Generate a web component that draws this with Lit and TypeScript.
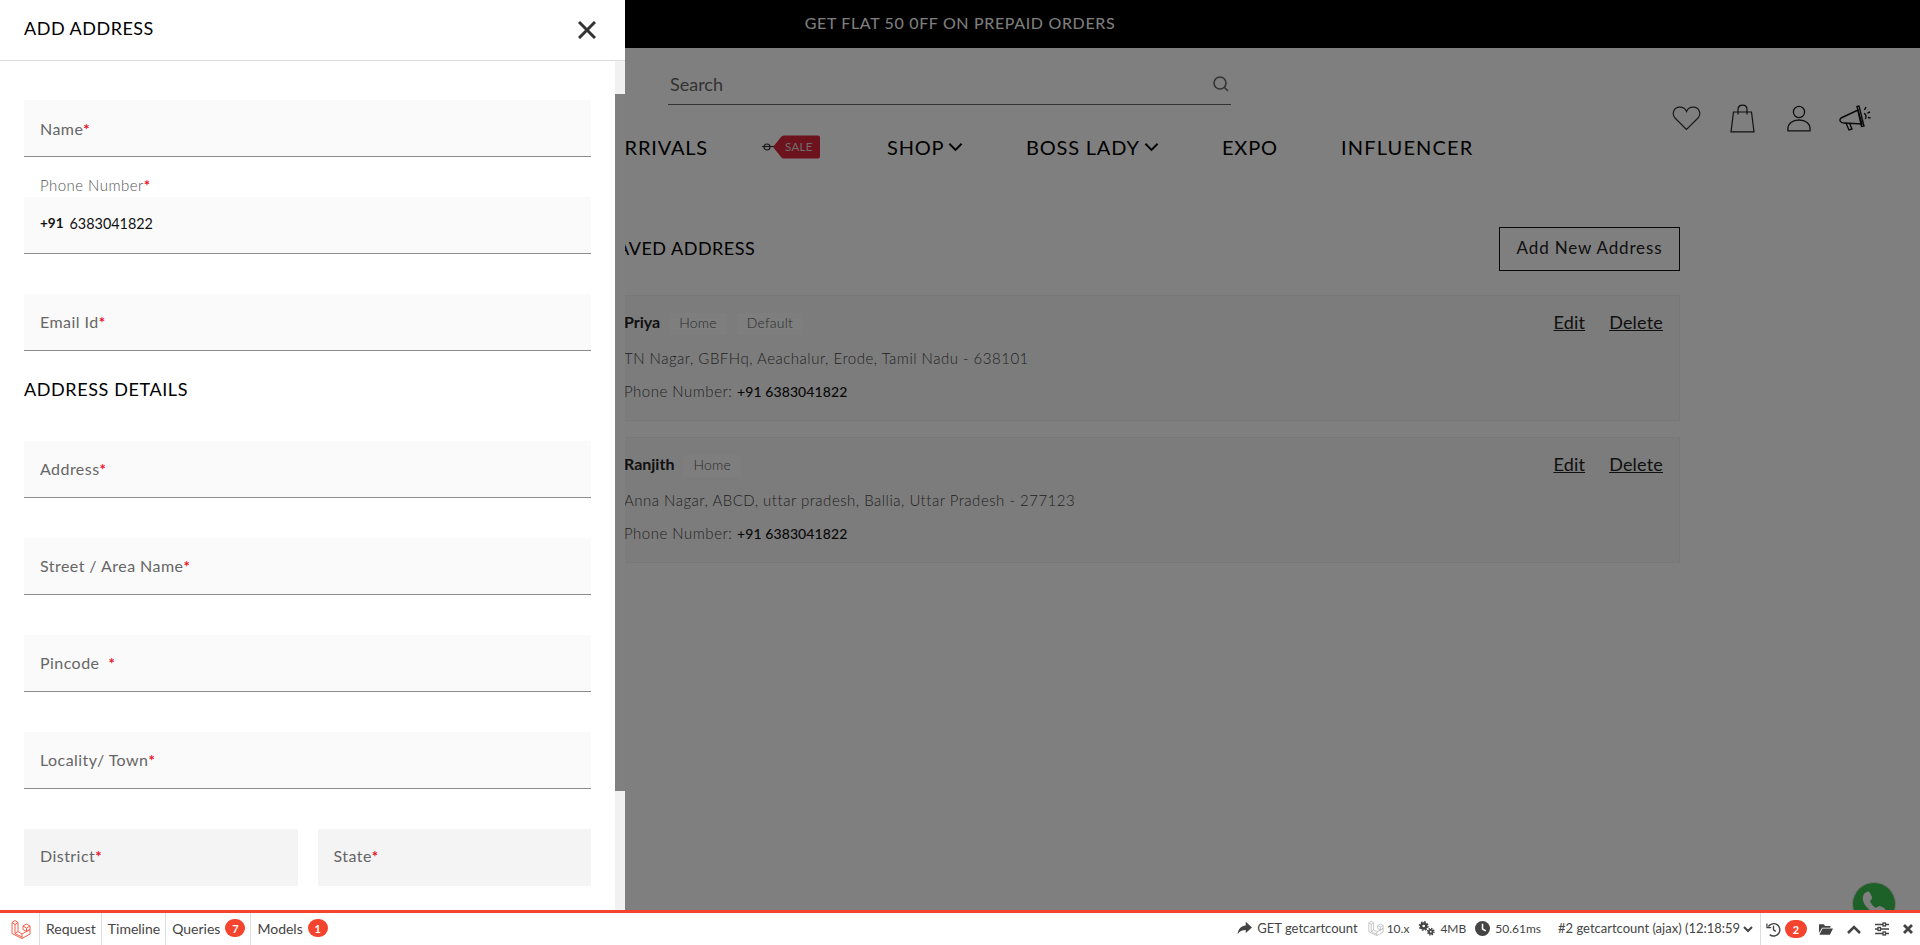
import { LitElement, html, css, svg } from 'lit';
import { customElement } from 'lit/decorators.js';

const laravelIcon = (size: number, color: string) => html`
  <svg width=${size} height=${size} viewBox="0 0 20 20" fill="none" stroke=${color} stroke-width="1" stroke-linejoin="round">
    <path d="M1 3.5 4 1.5 7 3.5V12.5L4 14.5"/>
    <path d="M1 3.5V14.5L11 19.5 19 15V10.5"/>
    <path d="M1 3.5 4 5.5 7 3.5M4 5.5V14.5L11 18"/>
    <path d="M7 12.5 11 15 19 10.5M11 15V19.5"/>
    <path d="M12 7 15.5 5 19 7V10.5L15.5 12.5 12 10.5ZM12 7 15.5 9 19 7M15.5 9V12.5"/>
  </svg>
`;

const chevron = html`
  <svg class="chev" viewBox="0 0 16 10" fill="none" stroke="#000" stroke-width="2">
    <path d="M1.5 1.5 8 8l6.5-6.5"/>
  </svg>
`;

@customElement('top-page')
class TopPage extends LitElement {
  static styles = css`
    :host {
      display: block;
      color: #000;
      font-family: Lato, "Open Sans", sans-serif;
    }
    .offer {
      height: 48px;
      box-sizing: border-box;
      padding-bottom: 4px;
      background: #000;
      color: #fff;
      display: flex;
      align-items: center;
      justify-content: center;
      font-size: 16px;
      letter-spacing: 0.65px;
    }
    .head {
      display: flex;
      height: 86px;
      padding-left: 668px;
    }
    .search {
      width: 563px;
      height: 57px;
      box-sizing: border-box;
      border-bottom: 1px solid #666;
      display: flex;
      align-items: center;
      justify-content: space-between;
      padding: 16px 1px 0 2px;
      font-size: 18px;
      color: #666;
    }
    .icons {
      display: flex;
      margin: 55px 0 0 441px;
      gap: 30px;
      align-items: center;
      height: 30px;
    }
    .nav {
      display: grid;
      grid-template-columns: 708px 179px 139px 196px 119px auto;
      height: 26px;
      align-items: center;
      font-size: 20px;
      letter-spacing: 0.8px;
      color: #000;
    }
    .nav .first {
      justify-self: end;
    }
    .nav .tag {
      margin-left: 54px;
      display: flex;
    }
    .nav .item {
      display: flex;
      align-items: center;
      gap: 4px;
    }
    .nav .wide {
      letter-spacing: 1.15px;
    }
    .chev {
      width: 15px;
      height: 10px;
    }
    .saved {
      margin: 67px 0 0 607px;
      width: 1073px;
    }
    .saved-head {
      display: flex;
      justify-content: space-between;
      align-items: center;
    }
    .saved-head h2 {
      margin: 0 0 2px;
      font-size: 18px;
      font-weight: 400;
      letter-spacing: 0.5px;
    }
    .add {
      width: 181px;
      height: 44px;
      box-sizing: border-box;
      border: 1.5px solid #111;
      padding-bottom: 3px;
      display: flex;
      align-items: center;
      justify-content: center;
      font-size: 17px;
      letter-spacing: 0.85px;
      color: #222;
    }
    .card {
      margin-top: 16px;
      height: 126px;
      box-sizing: border-box;
      border: 1px solid #eee;
      background: #f9f9f9;
      padding: 17px 16px 0;
    }
    .saved-head + .card {
      margin-top: 24px;
    }
    .row {
      display: flex;
      align-items: center;
      height: 22px;
    }
    .name {
      font-size: 16px;
      font-weight: 700;
      color: #222;
      margin: 0 9px 5px 0;
    }
    .pill {
      height: 22px;
      box-sizing: border-box;
      display: flex;
      align-items: center;
      padding: 0 10px 4px;
      margin-right: 10px;
      background: #fcfcfc;
      font-size: 14px;
      letter-spacing: 0.2px;
      color: #555;
      font-weight: 300;
    }
    .links {
      margin: 0 0 5px auto;
      display: flex;
      gap: 24px;
      font-size: 18px;
      letter-spacing: 0.2px;
      color: #222;
      text-decoration: underline;
    }
    .line {
      margin-top: 11px;
      height: 24px;
      line-height: 24px;
      font-size: 15px;
      font-weight: 300;
      letter-spacing: 0.5px;
      color: #444;
    }
    .line.phone {
      margin-top: 9px;
    }
    .line b {
      font-size: 14px;
      font-weight: 500;
      color: #111;
      letter-spacing: 0.1px;
    }
  `;

  renderCard(name: string, tags: string[], address: string) {
    return html`
      <div class="card">
        <div class="row">
          <span class="name">${name}</span>
          ${tags.map((t) => html`<span class="pill">${t}</span>`)}
          <span class="links"><span>Edit</span><span>Delete</span></span>
        </div>
        <div class="line">${address}</div>
        <div class="line phone">Phone Number: <b>+91 6383041822</b></div>
      </div>
    `;
  }

  render() {
    return html`
      <div class="offer">GET FLAT 50 0FF ON PREPAID ORDERS</div>
      <div class="head">
        <div class="search">
          <span>Search</span>
          <svg width="18" height="18" viewBox="0 0 18 18" fill="none" stroke="#666" stroke-width="1.6">
            <circle cx="8" cy="8" r="6"/><path d="M12.5 12.5 16 16"/>
          </svg>
        </div>
        <div class="icons">
          <svg width="29" height="25" viewBox="0 0 29 25" fill="none" stroke="#333" stroke-width="1.2">
            <path d="M14.5 23.5 3 12C-.5 8 1.5 1.5 7.5 1.2 11 1 13.5 3 14.5 5.5 15.5 3 18 1 21.5 1.2 27.5 1.5 29.5 8 26 12Z"/>
          </svg>
          <svg width="25" height="29" viewBox="0 0 25 29" fill="none" stroke="#222" stroke-width="1.2" style="margin-left:-1px">
            <path d="M3.5 8H21.5L24 27.8H1Z"/>
            <path d="M8 10.5V5.5C8 -.4 17 -.4 17 5.5V10.5"/>
          </svg>
          <svg width="24" height="27" viewBox="0 0 24 27" fill="none" stroke="#222" stroke-width="1.3" style="margin-left:2px">
            <circle cx="12" cy="7" r="5.6"/>
            <path d="M1 25.8H23C24 18 18 15 12 15 6 15 0 18 1 25.8Z"/>
          </svg>
          <svg width="32" height="26" viewBox="0 0 32 26" fill="none" stroke="#111" stroke-width="1.4" style="margin-left:-2px">
            <path d="M2 13 19 5 23 19 5 18C1 18 0 15 2 13Z"/>
            <path d="M18 1.5 20 1 25 21 22.5 21.5Z"/>
            <path d="M7 18 10 25 13 24 10.5 18"/>
            <path d="M25 8.5C27.5 9 27.5 13 26 14M27 2 25.5 5M31 7 28.5 8M31.5 13 29 12.5"/>
          </svg>
        </div>
      </div>
      <div class="nav">
        <span class="first">NEW ARRIVALS</span>
        <span class="tag">
          <svg width="58" height="24" viewBox="0 0 58 24">
            <circle cx="5" cy="12" r="3" fill="none" stroke="#333" stroke-width="1.2"/>
            <path d="M0 11.5H14" stroke="#333" stroke-width="1.2"/>
            <path d="M11 12 19 2Q20 .5 22 .5H56Q58 .5 58 2.5V21.5Q58 23.5 56 23.5H22Q20 23.5 19 22Z" fill="#d8263a"/>
            <text x="23" y="16" font-size="11.5" fill="#ddd" font-family="Lato, sans-serif" letter-spacing=".3">SALE</text>
          </svg>
        </span>
        <span class="item">SHOP ${chevron}</span>
        <span class="item">BOSS LADY ${chevron}</span>
        <span class="item">EXPO</span>
        <span class="item wide">INFLUENCER</span>
      </div>
      <div class="saved">
        <div class="saved-head">
          <h2>SAVED ADDRESS</h2>
          <div class="add">Add New Address</div>
        </div>
        ${this.renderCard('Priya', ['Home', 'Default'], 'TN Nagar, GBFHq, Aeachalur, Erode, Tamil Nadu - 638101')}
        ${this.renderCard('Ranjith', ['Home'], 'Anna Nagar, ABCD, uttar pradesh, Ballia, Uttar Pradesh - 277123')}
      </div>
    `;
  }
}

@customElement('address-drawer')
class AddressDrawer extends LitElement {
  static styles = css`
    :host {
      display: flex;
      flex-direction: column;
      width: 625px;
      height: 910px;
      background: #fff;
      font-family: Lato, "Open Sans", sans-serif;
    }
    .title {
      height: 61px;
      box-sizing: border-box;
      flex: none;
      border-bottom: 1px solid #ddd;
      display: flex;
      align-items: center;
      justify-content: space-between;
      padding: 0 29px 0 24px;
      font-size: 18px;
      letter-spacing: 0.5px;
      color: #000;
    }
    .title span {
      padding-bottom: 4px;
    }
    .main {
      flex: 1;
      display: flex;
      min-height: 0;
    }
    .form {
      flex: 1;
      padding: 0 24px;
      overflow: hidden;
    }
    .track {
      width: 10px;
      flex: none;
      background: #f1f1f1;
      padding-top: 33px;
      box-sizing: border-box;
    }
    .thumb {
      height: 697px;
      background: #808080;
    }
    .field {
      height: 57px;
      margin-top: 40px;
      box-sizing: border-box;
      background: #fafafa;
      border-bottom: 1px solid #8c8c8c;
      display: flex;
      align-items: center;
      padding: 0 16px 2px;
      font-size: 16px;
      letter-spacing: 0.45px;
      color: #666;
    }
    .form > .field:first-child {
      margin-top: 39px;
      padding-bottom: 0;
    }
    .field.filled {
      margin-top: 0;
      padding-bottom: 4px;
      font-size: 14.4px;
      color: #111;
      letter-spacing: 0;
    }
    .field.filled b {
      font-size: 13.5px;
      font-weight: 700;
      margin-right: 6px;
    }
    .field.select {
      background: #f4f4f4;
      border-bottom: 0;
      flex: 1;
      margin-top: 0;
      padding-bottom: 4px;
    }
    .star {
      color: #ec0f2a;
      font-size: 15px;
      font-weight: 700;
    }
    .phone-label {
      height: 40px;
      box-sizing: border-box;
      display: flex;
      align-items: flex-end;
      padding: 0 0 3px 16px;
      font-size: 15px;
      font-weight: 300;
      letter-spacing: 0.45px;
      color: #555;
    }
    h3 {
      margin: 28px 0 0;
      height: 22px;
      line-height: 21px;
      font-size: 18px;
      font-weight: 400;
      letter-spacing: 0.6px;
      color: #000;
    }
    .split {
      display: flex;
      gap: 20px;
      margin-top: 40px;
    }
  `;

  renderField(label: string) {
    return html`<div class="field"><span>${label}<span class="star">*</span></span></div>`;
  }

  render() {
    return html`
      <div class="title">
        <span>ADD ADDRESS</span>
        <svg width="18" height="18" viewBox="0 0 18 18" stroke="#333" stroke-width="3">
          <path d="M1 1 17 17M17 1 1 17"/>
        </svg>
      </div>
      <div class="main">
        <div class="form">
          ${this.renderField('Name')}
          <div class="phone-label"><span>Phone Number<span class="star">*</span></span></div>
          <div class="field filled"><b>+91</b> 6383041822</div>
          ${this.renderField('Email Id')}
          <h3>ADDRESS DETAILS</h3>
          ${this.renderField('Address')}
          ${this.renderField('Street / Area Name')}
          ${this.renderField('Pincode\u00a0\u00a0')}
          ${this.renderField('Locality/ Town')}
          <div class="split">
            <div class="field select"><span>District<span class="star">*</span></span></div>
            <div class="field select"><span>State<span class="star">*</span></span></div>
          </div>
        </div>
        <div class="track"><div class="thumb"></div></div>
      </div>
    `;
  }
}

@customElement('debug-bar')
class DebugBar extends LitElement {
  static styles = css`
    :host {
      display: flex;
      height: 35px;
      box-sizing: border-box;
      border-top: 3px solid #f4442e;
      background: #fff;
      font-family: Lato, "Open Sans", sans-serif;
      font-size: 14px;
      color: #444;
      align-items: stretch;
    }
    .logo {
      width: 40px;
      box-sizing: border-box;
      padding-left: 11px;
      display: flex;
      align-items: center;
      border-right: 1px solid #ddd;
    }
    .tab {
      display: flex;
      align-items: center;
      gap: 5px;
      padding: 0 5px 2px 6px;
      border-right: 1px solid #ddd;
    }
    .tab.last {
      border-right: 0;
    }
    .count {
      min-width: 20px;
      height: 18px;
      box-sizing: border-box;
      padding: 0 3px;
      border-radius: 9px;
      background: #f4442e;
      color: #fff;
      font-size: 11px;
      font-weight: 700;
      display: flex;
      align-items: center;
      justify-content: center;
    }
    .right {
      margin-left: auto;
      display: flex;
      align-items: center;
      font-size: 13px;
    }
    .stat {
      display: flex;
      align-items: center;
      gap: 5px;
      margin: 0 11px 2px 0;
      white-space: nowrap;
    }
    .stat.num {
      font-size: 12px;
    }
    .stat.get {
      margin-right: 10px;
    }
    .stat.tight {
      margin-right: 9px;
    }
    .select {
      margin: 0 0 2px 6px;
      width: 185px;
      white-space: nowrap;
      font-size: 13px;
    }
    .tools {
      display: flex;
      align-items: center;
      height: 100%;
      border-left: 1px solid #ddd;
      margin-left: 7px;
      padding: 0 7px 0 5px;
    }
  `;

  render() {
    return html`
      <div class="logo">${laravelIcon(20, '#f4604c')}</div>
      <div class="tab">Request</div>
      <div class="tab">Timeline</div>
      <div class="tab">Queries <span class="count">7</span></div>
      <div class="tab last">Models <span class="count">1</span></div>
      <div class="right">
        <span class="stat get">
          <svg width="15" height="14" viewBox="0 0 24 22" fill="#444">
            <path d="M14 1 24 10 14 19V14C8 14 4 16 1 21 1.5 13 7 7.5 14 7Z"/>
          </svg>
          GET getcartcount
        </span>
        <span class="stat num tight" style="gap:3px">${laravelIcon(16, '#bbb')} 10.x</span>
        <span class="stat num tight">
          <svg width="17" height="15" viewBox="0 0 24 21" fill="none" stroke="#444">
            <circle cx="8" cy="7" r="3.6" stroke-width="3.4"/>
            <circle cx="8" cy="7" r="6" stroke-width="2" stroke-dasharray="2.4 2.3"/>
            <circle cx="18" cy="15" r="2.6" stroke-width="2.6"/>
            <circle cx="18" cy="15" r="4.6" stroke-width="1.8" stroke-dasharray="2 1.6"/>
          </svg>
          4MB
        </span>
        <span class="stat num">
          <svg width="15" height="15" viewBox="0 0 16 16">
            <circle cx="8" cy="8" r="8" fill="#444"/>
            <path d="M8 3V8.5L11.5 10.5" fill="none" stroke="#fff" stroke-width="1.6"/>
          </svg>
          50.61ms
        </span>
        <span class="select">#2 getcartcount (ajax) (12:18:59</span>
        <svg width="10" height="7" viewBox="0 0 10 7" fill="none" stroke="#444" stroke-width="2">
          <path d="M1 1 5 5 9 1"/>
        </svg>
        <div class="tools">
          <svg width="15" height="15" viewBox="0 0 16 16" fill="none" stroke="#444" stroke-width="1.5">
            <path d="M2.5 5A6.6 6.6 0 1 1 4 13.5"/><path d="M1 1.5V6H5.5" stroke-width="1.3"/><path d="M8 4V8.5L10.5 10"/>
          </svg>
          <span class="count" style="margin:0 12px 0 4px;width:22px">2</span>
          <svg width="14" height="12" viewBox="0 0 16 13" fill="#444" style="margin-right:14px">
            <path d="M0 1H5.5L7 3H13V5H3.5L0 11ZM4 6H16L12.5 13H0.5Z"/>
          </svg>
          <svg width="14" height="9" viewBox="0 0 14 9" fill="none" stroke="#444" stroke-width="2.6" style="margin-right:14px">
            <path d="M1 8 7 2 13 8"/>
          </svg>
          <svg width="14" height="14" viewBox="0 0 14 14" stroke="#444" stroke-width="1.3" fill="#fff" style="margin-right:14px">
            <path d="M0 2.5H14M0 7H14M0 11.5H14"/>
            <rect x="8" y="1" width="2.5" height="3"/><rect x="3" y="5.5" width="2.5" height="3"/><rect x="8" y="10" width="2.5" height="3"/>
          </svg>
          <svg width="10" height="10" viewBox="0 0 10 10" stroke="#444" stroke-width="2.8">
            <path d="M1 1 9 9M9 1 1 9"/>
          </svg>
        </div>
      </div>
    `;
  }
}

@customElement('app-root')
export class AppRoot extends LitElement {
  static styles = css`
    :host {
      display: block;
      position: relative;
      width: 1920px;
      height: 945px;
      overflow: hidden;
      background: #fff;
    }
    .wa {
      position: absolute;
      left: 1853px;
      top: 883px;
      width: 42px;
      height: 42px;
      border-radius: 50%;
      background: #3cc250;
      box-shadow: 0 0 0 1px #ddd;
    }
    .overlay {
      position: absolute;
      inset: 0;
      background: rgba(0, 0, 0, 0.5);
    }
    address-drawer {
      position: absolute;
      left: 0;
      top: 0;
    }
    debug-bar {
      position: absolute;
      left: 0;
      right: 0;
      bottom: 0;
    }
  `;

  render() {
    return html`
      <top-page></top-page>
      <div class="wa">
        <svg width="42" height="42" viewBox="0 0 42 42" fill="#fff">
          ${svg`<path d="M12 10c2-2 4-2 5 0l2 4c0 2-1 3-2 4 1 3 3 5 6 7 1-1 2-2 4-2l4 2c2 1 2 3 0 5-3 3-8 2-13-2-5-4-9-9-8-14 0-2 1-3 2-4Z"/>`}
        </svg>
      </div>
      <div class="overlay"></div>
      <address-drawer></address-drawer>
      <debug-bar></debug-bar>
    `;
  }
}
